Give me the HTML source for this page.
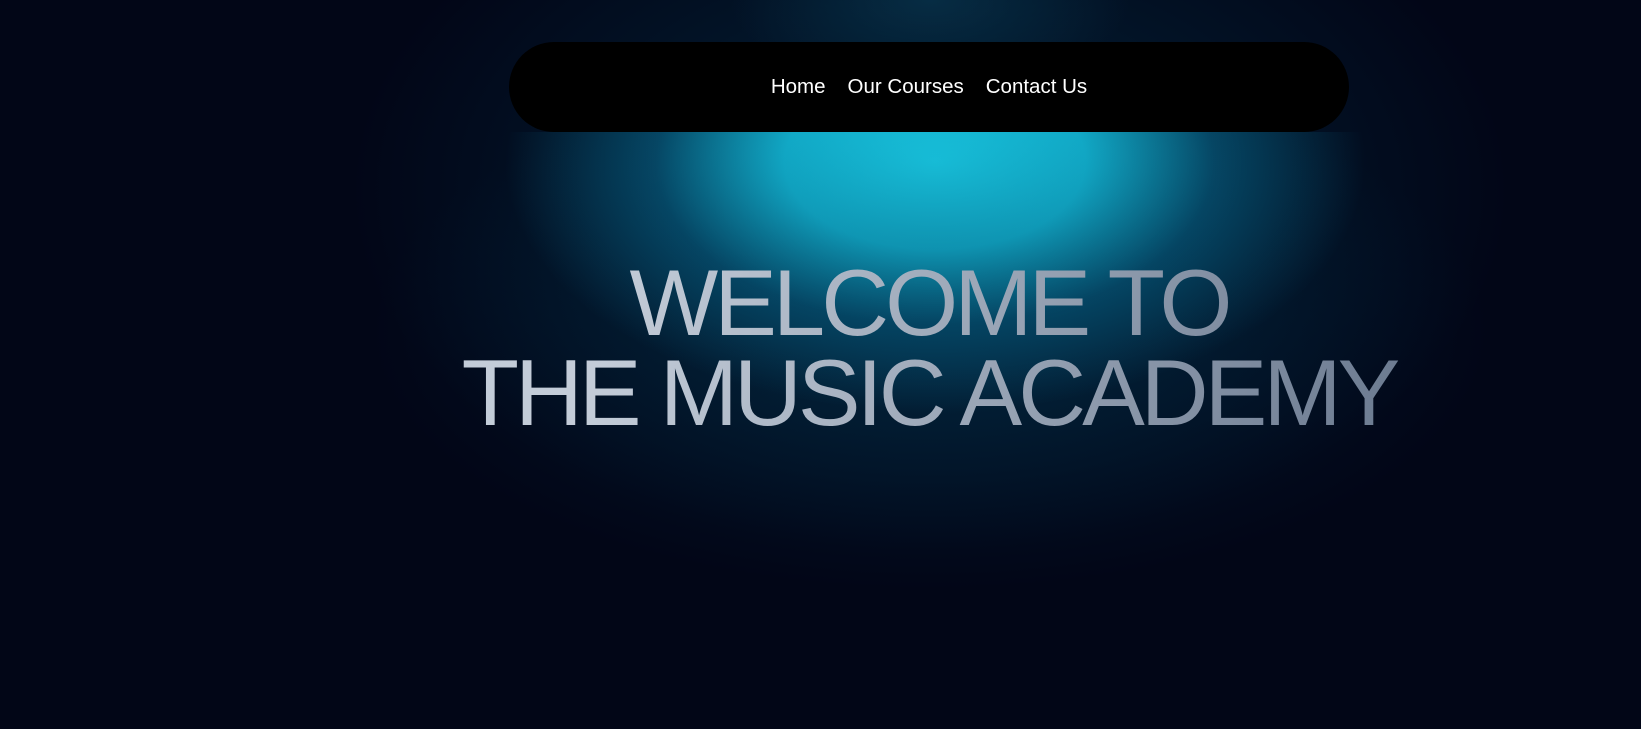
<!DOCTYPE html>
<html><head><style>
html,body{margin:0;padding:0;width:1641px;height:729px;overflow:hidden;background:#020617;}
body{position:relative;font-family:"Liberation Sans",Arial,sans-serif;}
.g{position:absolute;left:0;top:0;width:1641px;height:729px;}
.nav{position:absolute;left:509px;top:42px;width:840px;height:90px;background:#000;border-radius:45px;display:flex;align-items:center;justify-content:center;gap:22px;color:#fff;font-size:20.5px;}
h1{position:absolute;left:129px;width:1600px;top:258px;margin:0;text-align:center;font-weight:400;font-size:94px;line-height:90px;letter-spacing:-4px;white-space:nowrap;
background:linear-gradient(100deg,#c3ccd8 30%,#6b7a90 80%);-webkit-background-clip:text;background-clip:text;color:transparent;}
</style></head><body>
<div class="g" style="background:
radial-gradient(ellipse 200px 90px at 930px 0px, rgba(8,55,80,0.7), rgba(2,6,23,0) 100%),
radial-gradient(ellipse 580px 360px at 930px 190px, rgba(6,140,180,0.22), rgba(2,6,23,0) 100%);"></div>
<div style="position:absolute;left:0;top:132px;width:1641px;height:400px;background:
radial-gradient(ellipse 430px 250px at 935px 30px, rgba(26,208,234,1) 0%, rgba(20,192,222,0.92) 35%, rgba(8,120,160,0.5) 65%, rgba(2,6,23,0) 100%);"></div>
<div class="g" style="background:radial-gradient(ellipse 560px 260px at 930px 330px, rgba(3,60,90,0.4), rgba(2,6,23,0) 100%);"></div>
<div class="nav"><span>Home</span><span>Our Courses</span><span>Contact Us</span></div>
<h1>WELCOME TO<br>THE MUSIC ACADEMY</h1>
</body></html>
